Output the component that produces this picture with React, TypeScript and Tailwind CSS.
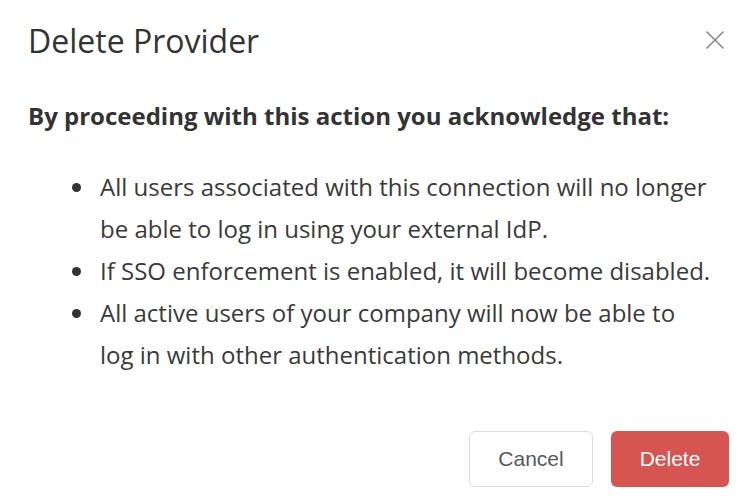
import { X } from "lucide-react"

const items = [
    "All users associated with this connection will no longer be able to log in using your external IdP.",
    "If SSO enforcement is enabled, it will become disabled.",
    "All active users of your company will now be able to log in with other authentication methods.",
]

export default function App() {
    return <div className="w-[755px] h-[504px] bg-white text-[#333] font-['Open_Sans',sans-serif] overflow-hidden">
        <div className="flex justify-between items-start pl-7 pr-[24px] pt-[20px]">
            <h2 className="text-[32px] leading-[42px] font-normal text-[#333]">Delete Provider</h2>
            <button className="mt-[4px] text-[#8a8a8a]">
                <X size={32} strokeWidth={1.2} />
            </button>
        </div>

        <div className="px-7 pt-[38px]">
            <p className="text-[24px] leading-[32px] font-bold text-[#333]">By proceeding with this action you acknowledge that:</p>
            <ul className="mt-[34px] pl-[68px] pr-[14px] list-disc text-[24px] leading-[42px] text-[#3a3a3a] marker:text-[#333]">
                {items.map((t) => <li key={t} className="pl-[4px]">{t}</li>)}
            </ul>
        </div>

        <div className="flex justify-end gap-[18px] pr-[26px] mt-[55px]">
            <button className="w-[124px] h-[56px] rounded-[6px] border border-[#dcdde1] bg-white text-[21px] text-[#555a60] font-['Liberation_Sans',sans-serif]">Cancel</button>
            <button className="w-[118px] h-[56px] rounded-[6px] bg-[#d65550] text-white text-[21px] font-['Liberation_Sans',sans-serif]">Delete</button>
        </div>
    </div>
}
